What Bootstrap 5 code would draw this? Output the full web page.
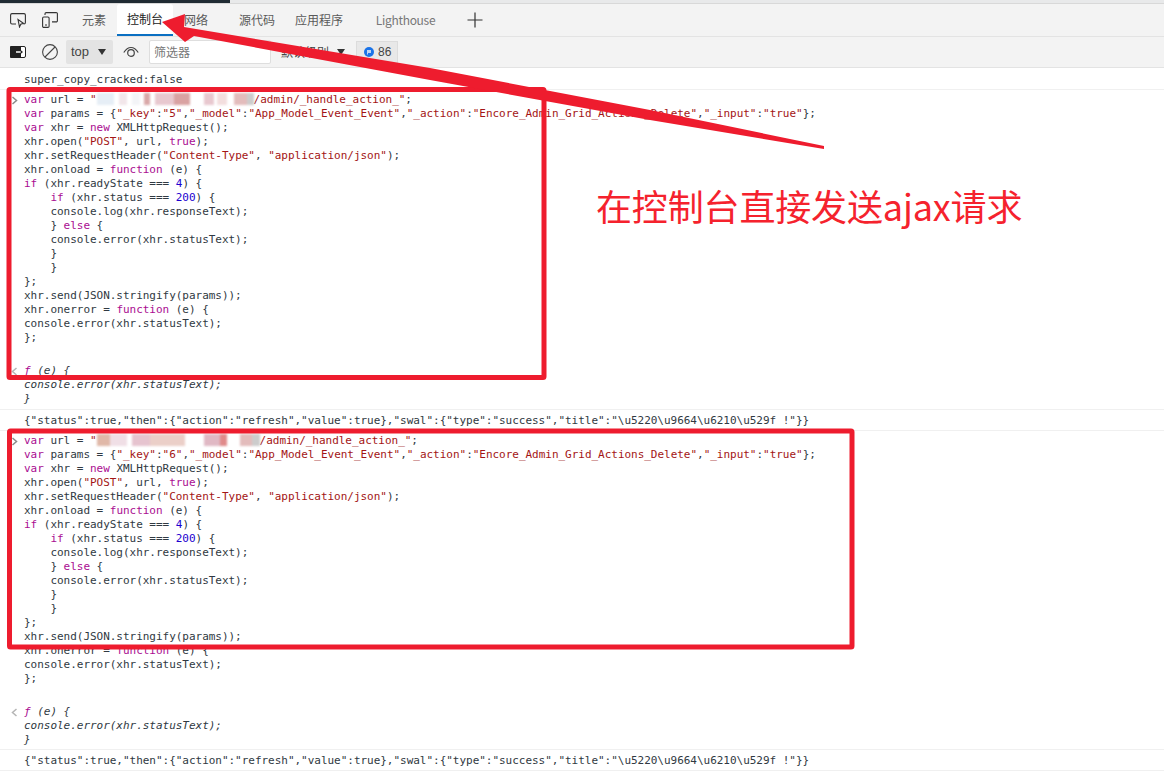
<!doctype html>
<html lang="zh"><head><meta charset="utf-8"><title>控制台</title>
<link href="https://cdn.jsdelivr.net/npm/bootstrap@5.3.0/dist/css/bootstrap.min.css" rel="stylesheet">
<style>
html,body{height:100%;overflow:hidden;background:#fff}
body{font-family:"Noto Sans CJK SC","Liberation Sans",sans-serif;position:relative;color:#444}
.topstrip{height:4px;background:#e8e9ea;border-bottom:1px solid #d8d8d8}
.topstrip>div{width:230px;height:3px;background:#202b33}
.tabbar{height:33px;background:#f3f3f3;border-bottom:1px solid #e3e3e3;font-size:12px;color:#5a5a5a}
.tabicons{width:71px;padding-left:10px;gap:16px}
.dtab{height:32px;display:flex;align-items:center;justify-content:center}
.dtab.on{background:#fff;color:#222;border-bottom:2px solid #0a6fc2;border-radius:3px 3px 0 0}
.t1{width:46px}.t2{width:56px}.t3{width:46px}.t4{width:76px}.t5{width:48px}.t6{width:125px;color:#777;letter-spacing:-.3px}
.plusico{margin-left:-1px}
.toolbar{height:31px;background:#f3f3f3;border-bottom:1px solid #e3e3e3;font-size:12px;padding-left:10px;color:#444}
.clearico{margin-left:16px}
.topsel{width:47px;height:24px;background:#e3e3e3;font-family:"Liberation Sans",sans-serif;font-size:13px;margin-left:8px;padding-left:5px;border-radius:2px}
.tri{width:0;height:0;border-left:4px solid transparent;border-right:4px solid transparent;border-top:6px solid #333}
.trisel{margin-left:9px}
.eyeico{margin-left:10px}
.filterbox{width:122px;height:24px;background:#fff;border:1px solid #dedede;border-radius:2px;padding-left:4px;color:#777;margin-left:10px}
.levels{width:75px;margin-left:10px;color:#444}
.issues{width:42px;height:23px;background:#e8e8e8;border:1px solid #dcdcdc;font-size:12px;font-family:"Liberation Sans",sans-serif;padding-left:7px;gap:4px}
.cons{font-family:"DejaVu Sans Mono",monospace;font-size:11px;line-height:14px;letter-spacing:-.025px;color:#303942}
.msg{padding-left:24px;white-space:pre;position:relative}
.sep{border-top:1px solid #f0f0f0}
.first{padding-top:5px;padding-bottom:2px}
.inp{padding-top:3px}
.out{padding-top:5px}
.stat{padding-top:4px;padding-bottom:2px}
.gapb{margin-bottom:3px}
.gapc{margin-bottom:2px}
.kw{color:#aa0d91}.st{color:#a31515}.nu{color:#1c00cf}
.gut{position:absolute;left:11px;width:7px;height:9px}
.gut.g1{top:6px}.gut.g2{top:8px}
.ita{font-style:italic}
.smudge{display:inline-block;height:12px;vertical-align:-2px;filter:blur(.8px)}
.sm1{width:157px;background:linear-gradient(90deg,#e6eef6 0 17px,#fff 17px 22px,#f2e6ea 22px 30px,#fff 30px 35px,#f3f4f7 35px 43px,#fff 43px 47px,#d9a8a8 47px 53px,#fff 53px 58px,#e8c8cf 58px 77px,#d9a2a2 77px 93px,#fff 93px 107px,#e8c8cf 107px 117px,#fff 117px 120px,#f3dede 120px 130px,#fff 130px 137px,#e3bcbc 137px 150px,#ccc 150px 157px)}
.sm2{width:163px;background:linear-gradient(90deg,#e0b8a8 0 13px,#f0dfe6 13px 30px,#fff 30px 35px,#e6c3cf 35px 53px,#ebcfc8 53px 88px,#fff 88px 107px,#e0b8c4 107px 123px,#e08a8a 123px 130px,#fff 130px 143px,#e3bcbc 143px 155px,#ccc 155px 163px)}
.overlay{position:absolute;left:0;top:0;pointer-events:none}
.anno{position:absolute;left:596px;top:180px;font-size:36px;line-height:50px;letter-spacing:-.15px;color:#f5222d;white-space:nowrap}
</style></head><body>
<div class="topstrip"><div></div></div>
<div class="tabbar d-flex align-items-center">
 <div class="tabicons d-flex align-items-center">
  <svg width="16" height="15" viewBox="0 0 16 15" fill="none" stroke="#333" stroke-width="1.100"><path d="M6 11H2A1.500 1.500 0 0 1 .6 9.500V2A1.500 1.500 0 0 1 2 .6h12A1.500 1.500 0 0 1 15.400 2v7.500A1.500 1.500 0 0 1 14 11h-.5"/><path d="M8 6.500l1.500 7.500 1.300-2.700 2.700-1z"/></svg>
  <svg width="16" height="16" viewBox="0 0 16 16" fill="none" stroke="#333" stroke-width="1.100"><rect x=".6" y="5" width="6.500" height="10.400" rx="1.200"/><path d="M3 3V1.800A1.200 1.200 0 0 1 4.200.6h10A1.200 1.200 0 0 1 15.400 1.800V8.700A1.200 1.200 0 0 1 14.200 9.900H10"/><path d="M3 13h2"/></svg>
 </div>
 <div class="dtab t1">元素</div><div class="dtab t2 on">控制台</div><div class="dtab t3">网络</div><div class="dtab t4">源代码</div><div class="dtab t5">应用程序</div><div class="dtab t6">Lighthouse</div>
 <svg class="plusico" width="16" height="16" viewBox="0 0 16 16" stroke="#333" stroke-width="1.200"><path d="M8 .5v15M.5 8h15"/></svg>
</div>
<div class="toolbar d-flex align-items-center">
 <svg width="16" height="12" viewBox="0 0 16 12"><rect x=".5" y=".5" width="15" height="11" rx="1.500" fill="#fff" stroke="#222"/><path d="M1 0h10v12H1a1 1 0 0 1-1-1V1a1 1 0 0 1 1-1z" fill="#222"/><path d="M6 6h4" stroke="#fff" stroke-width="1.500"/><path d="M10 3.500L13 6l-3 2.500z" fill="#222"/><path d="M11 6h-1" stroke="#fff"/></svg>
 <svg class="clearico" width="16" height="16" viewBox="0 0 16 16" fill="none" stroke="#444" stroke-width="1.100"><circle cx="8" cy="8" r="7.400"/><path d="M3 13L13 3"/></svg>
 <div class="topsel d-flex align-items-center">top<span class="tri trisel"></span></div>
 <svg class="eyeico" width="16" height="12" viewBox="0 0 16 12" fill="none" stroke="#444" stroke-width="1.200"><path d="M.8 6.500C3 3 5.500 1.500 8 1.500s5 1.500 7.200 5"/><circle cx="8" cy="7" r="3.300"/></svg>
 <div class="filterbox d-flex align-items-center">筛选器</div>
 <div class="levels d-flex align-items-center">默认级别<span class="tri ms-2"></span></div>
 <div class="issues d-flex align-items-center"><svg width="10" height="10" viewBox="0 0 10 10"><circle cx="5" cy="5" r="5" fill="#1a73e8"/><path d="M3 3h4v3H4v1.500H3z" fill="#bcd4f5"/></svg>86</div>
</div>
<div class="cons">
<div class="msg first">super_copy_cracked:false</div>
<div class="sep"></div>
<div class="msg inp"><svg class="gut g1" viewBox="0 0 7 9" fill="none" stroke="#8a8a8a" stroke-width="1.500"><path d="M1.500 1l4 3.500-4 3.500"/></svg><span class="kw">var</span> url = <span class="st">"<span class="smudge sm1"></span>/admin/_handle_action_"</span>;
<span class="kw">var</span> params = {<span class="st">"_key"</span>:<span class="st">"5"</span>,<span class="st">"_model"</span>:<span class="st">"App_Model_Event_Event"</span>,<span class="st">"_action"</span>:<span class="st">"Encore_Admin_Grid_Actions_Delete"</span>,<span class="st">"_input"</span>:<span class="st">"true"</span>};
<span class="kw">var</span> xhr = <span class="kw">new</span> XMLHttpRequest();
xhr.open(<span class="st">"POST"</span>, url, <span class="kw">true</span>);
xhr.setRequestHeader(<span class="st">"Content-Type"</span>, <span class="st">"application/json"</span>);
xhr.onload = <span class="kw">function</span> (e) {
<span class="kw">if</span> (xhr.readyState === <span class="nu">4</span>) {
    <span class="kw">if</span> (xhr.status === <span class="nu">200</span>) {
    console.log(xhr.responseText);
    } <span class="kw">else</span> {
    console.error(xhr.statusText);
    }
    }
};
xhr.send(JSON.stringify(params));
xhr.onerror = <span class="kw">function</span> (e) {
console.error(xhr.statusText);
};

</div>
<div class="msg ita out gapb"><svg class="gut g2" viewBox="0 0 7 9" fill="none" stroke="#b5b5b5" stroke-width="1.500"><path d="M5.500 1l-4 3.500 4 3.500"/></svg><span class="kw">&#402;</span> (e) {
console.error(xhr.statusText);
}</div>
<div class="sep"></div>
<div class="msg stat">{"status":true,"then":{"action":"refresh","value":true},"swal":{"type":"success","title":"\u5220\u9664\u6210\u529f !"}}</div>
<div class="sep"></div>
<div class="msg inp"><svg class="gut g1" viewBox="0 0 7 9" fill="none" stroke="#8a8a8a" stroke-width="1.500"><path d="M1.500 1l4 3.500-4 3.500"/></svg><span class="kw">var</span> url = <span class="st">"<span class="smudge sm2"></span>/admin/_handle_action_"</span>;
<span class="kw">var</span> params = {<span class="st">"_key"</span>:<span class="st">"6"</span>,<span class="st">"_model"</span>:<span class="st">"App_Model_Event_Event"</span>,<span class="st">"_action"</span>:<span class="st">"Encore_Admin_Grid_Actions_Delete"</span>,<span class="st">"_input"</span>:<span class="st">"true"</span>};
<span class="kw">var</span> xhr = <span class="kw">new</span> XMLHttpRequest();
xhr.open(<span class="st">"POST"</span>, url, <span class="kw">true</span>);
xhr.setRequestHeader(<span class="st">"Content-Type"</span>, <span class="st">"application/json"</span>);
xhr.onload = <span class="kw">function</span> (e) {
<span class="kw">if</span> (xhr.readyState === <span class="nu">4</span>) {
    <span class="kw">if</span> (xhr.status === <span class="nu">200</span>) {
    console.log(xhr.responseText);
    } <span class="kw">else</span> {
    console.error(xhr.statusText);
    }
    }
};
xhr.send(JSON.stringify(params));
xhr.onerror = <span class="kw">function</span> (e) {
console.error(xhr.statusText);
};

</div>
<div class="msg ita out gapc"><svg class="gut g2" viewBox="0 0 7 9" fill="none" stroke="#b5b5b5" stroke-width="1.500"><path d="M5.500 1l-4 3.500 4 3.500"/></svg><span class="kw">&#402;</span> (e) {
console.error(xhr.statusText);
}</div>
<div class="sep"></div>
<div class="msg stat">{"status":true,"then":{"action":"refresh","value":true},"swal":{"type":"success","title":"\u5220\u9664\u6210\u529f !"}}</div>
<div class="sep"></div>
</div>
<svg class="overlay" width="1164" height="772" viewBox="0 0 1164 772">
 <rect x="9" y="89.500" width="535" height="288" fill="none" stroke="#ee1c2e" stroke-width="5" rx="1"/>
 <rect x="9.500" y="431" width="842.500" height="216" fill="none" stroke="#ee1c2e" stroke-width="5" rx="1"/>
 <path d="M162 22L185 14L184 27L430 68L650 110L824 146L824 149L650 120L430 80L194 36L185 42Z" fill="#ee1c2e"/>
</svg>
<div class="anno">在控制台直接发送ajax请求</div>
<script src="https://cdn.jsdelivr.net/npm/bootstrap@5.3.0/dist/js/bootstrap.bundle.min.js"></script>
</body></html>
